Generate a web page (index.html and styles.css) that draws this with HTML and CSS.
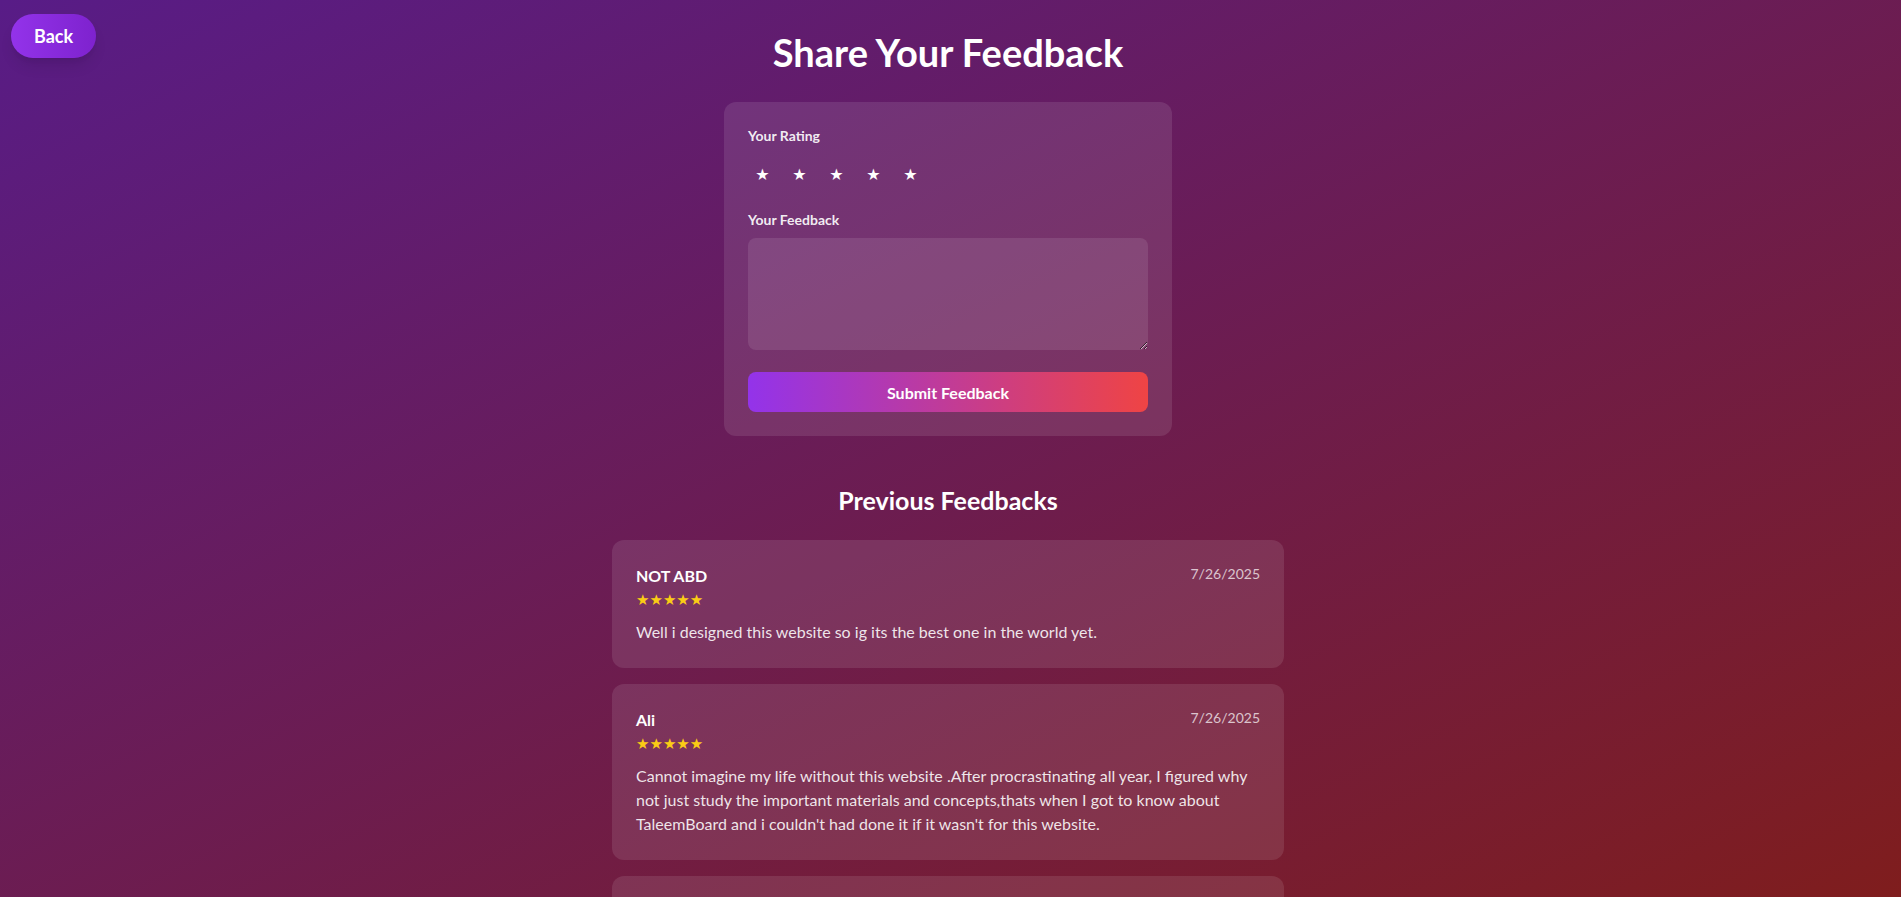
FILE: index.html
```html
<!DOCTYPE html>
<html lang="en">
<head>
<meta charset="utf-8">
<title>Share Your Feedback</title>
<link rel="stylesheet" href="styles.css">
</head>
<body>
<button class="back">Back</button>
<main class="page">
  <h1 class="title">Share Your Feedback</h1>
  <form class="form-card">
    <label class="label">Your Rating</label>
    <div class="rating">
      <button type="button" class="rate-star">★</button>
      <button type="button" class="rate-star">★</button>
      <button type="button" class="rate-star">★</button>
      <button type="button" class="rate-star">★</button>
      <button type="button" class="rate-star">★</button>
    </div>
    <label class="label label-feedback">Your Feedback</label>
    <textarea class="input"></textarea>
    <button type="button" class="submit">Submit Feedback</button>
  </form>

  <h2 class="prev-title">Previous Feedbacks</h2>
  <div class="list">
    <div class="fb-card">
      <div class="fb-head">
        <span class="fb-name">NOT ABD</span>
        <span class="fb-date">7/26/2025</span>
      </div>
      <div class="fb-stars">★★★★★</div>
      <p class="fb-text">Well i designed this website so ig its the best one in the world yet.</p>
    </div>
    <div class="fb-card">
      <div class="fb-head">
        <span class="fb-name">Ali</span>
        <span class="fb-date">7/26/2025</span>
      </div>
      <div class="fb-stars">★★★★★</div>
      <p class="fb-text">Cannot imagine my life without this website .After procrastinating all year, I figured why not just study the important materials and concepts,thats when I got to know about TaleemBoard and i couldn't had done it if it wasn't for this website.</p>
    </div>
    <div class="fb-card">
      <div class="fb-head">
        <span class="fb-name">Sara</span>
        <span class="fb-date">7/25/2025</span>
      </div>
      <div class="fb-stars">★★★★★</div>
      <p class="fb-text">Really helpful resources.</p>
    </div>
  </div>
</main>
</body>
</html>
```

FILE: styles.css
```css
html {
  background: linear-gradient(to bottom right, #581c87, #7f1d1d) fixed;
  min-height: 100%;
}

body {
  margin: 0;
  font-family: Lato, "Open Sans", sans-serif;
  color: #fff;
}

.back {
  position: absolute;
  top: 14px;
  left: 11px;
  height: 44px;
  padding: 0 23px;
  border: none;
  border-radius: 9999px;
  background: linear-gradient(to right, #9333ea, #7e22ce);
  color: #fff;
  font-family: inherit;
  font-size: 18px;
  font-weight: 700;
  line-height: 28px;
  box-shadow: 0 10px 15px -3px rgba(0, 0, 0, 0.1), 0 4px 6px -4px rgba(0, 0, 0, 0.1);
}

.page {
  display: flex;
  flex-direction: column;
  align-items: center;
  padding: 32px 21px 40px 16px;
}

.title {
  margin: 0 0 30px;
  font-size: 38px;
  line-height: 40px;
  font-weight: 700;
}

.form-card {
  box-sizing: border-box;
  width: 448px;
  padding: 24px;
  border-radius: 12px;
  background: rgba(255, 255, 255, 0.1);
  display: flex;
  flex-direction: column;
}

.label {
  font-size: 14px;
  line-height: 20px;
  font-weight: 700;
  color: rgba(255, 255, 255, 0.92);
  margin-bottom: 8px;
}

.label-feedback {
  margin-top: 16px;
}

.rating {
  display: flex;
  gap: 8px;
  height: 40px;
}

.rate-star {
  width: 29px;
  padding: 0;
  border: none;
  background: none;
  color: #fff;
  font-family: "DejaVu Sans", sans-serif;
  font-size: 16px;
  line-height: 42px;
}

.input {
  box-sizing: border-box;
  width: 100%;
  height: 112px;
  border: none;
  border-radius: 8px;
  background: rgba(255, 255, 255, 0.1);
  color: #fff;
  margin: 0;
  resize: vertical;
  display: block;
}

.submit {
  margin-top: 22px;
  height: 40px;
  border: none;
  border-radius: 8px;
  background: linear-gradient(to right, #9333ea, #ef4444);
  color: #fff;
  font-family: inherit;
  font-size: 16px;
  font-weight: 700;
}

.prev-title {
  margin: 48px 0 24px;
  font-size: 25px;
  line-height: 32px;
  font-weight: 700;
}

.list {
  width: 672px;
  display: flex;
  flex-direction: column;
  gap: 16px;
}

.fb-card {
  padding: 24px;
  border-radius: 12px;
  background: rgba(255, 255, 255, 0.1);
}

.fb-head {
  display: flex;
  justify-content: space-between;
  align-items: flex-start;
}

.fb-name {
  font-size: 16px;
  line-height: 24px;
  font-weight: 700;
}

.fb-date {
  font-size: 14px;
  line-height: 20px;
  color: rgba(255, 255, 255, 0.72);
}

.fb-stars {
  font-family: "DejaVu Sans", sans-serif;
  font-size: 15px;
  line-height: 24px;
  color: #facc15;
}

.fb-text {
  margin: 8px 0 0;
  font-size: 16px;
  line-height: 24px;
  color: rgba(255, 255, 255, 0.88);
}
```
